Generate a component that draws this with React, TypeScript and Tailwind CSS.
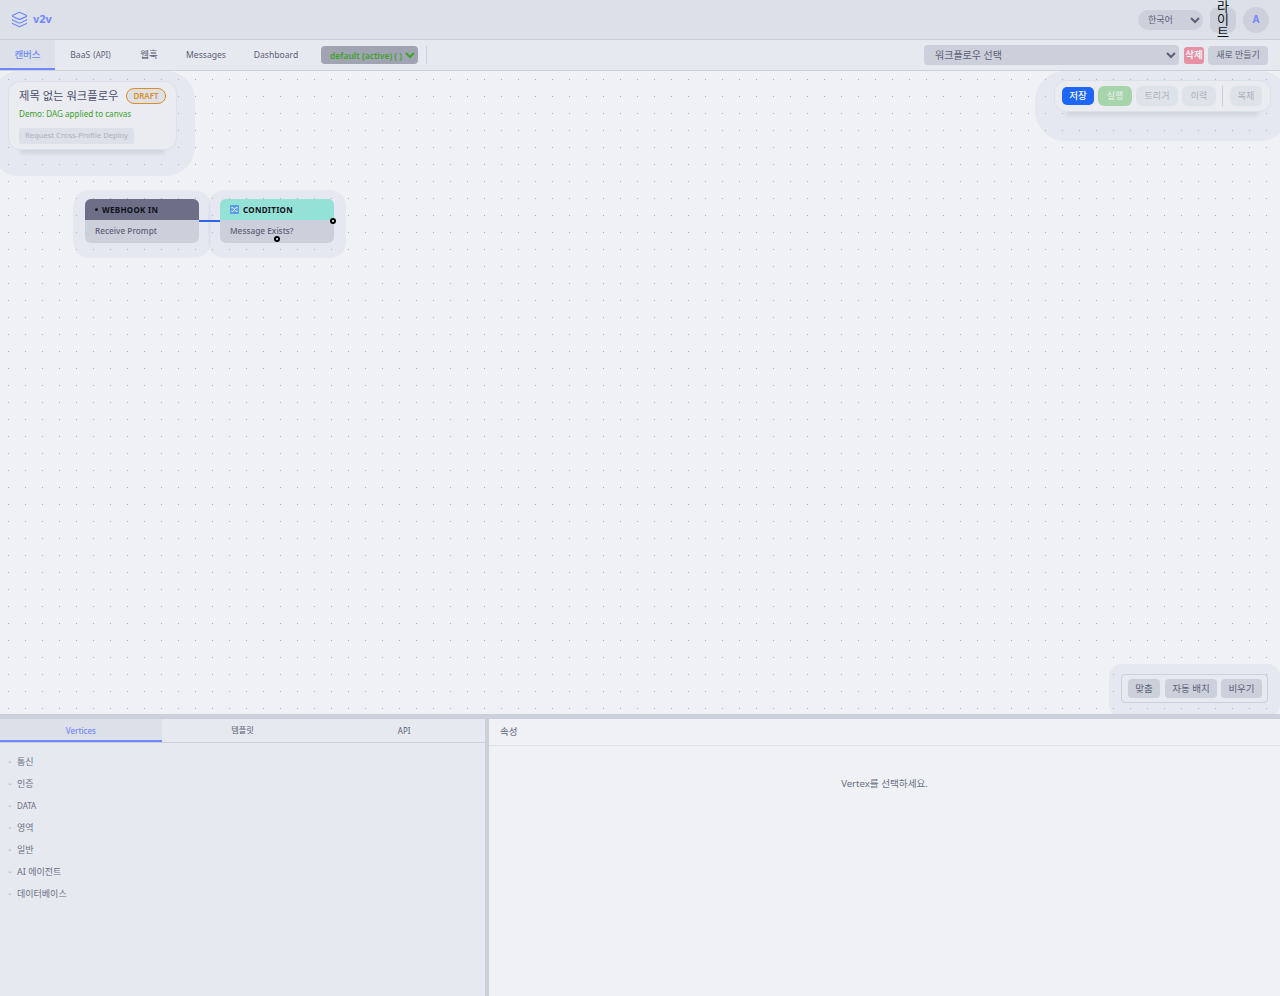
import { Layers } from "lucide-react";

const font = "font-['Noto_Sans','Noto_Sans_CJK_KR',sans-serif]";

function Tab({ label, active, w, size }: { label: React.ReactNode; active?: boolean; w: string; size: string }) {
  return (
    <div className={`${w} ${size} h-full pt-[2px] flex items-center justify-center border-b-2 ${active ? "bg-[#dce0e8] text-[#7287fd] border-[#7287fd] font-medium" : "border-transparent text-[#5c5f77]"}`}>
      {label}
    </div>
  );
}

function GhostButton({ label, w }: { label: string; w: string }) {
  return (
    <button className={`${w} h-[20px] rounded-[6px] bg-[#dce0e8] text-[#9ca0b0] text-[9px] opacity-80`}>{label}</button>
  );
}

function Node({ title, body, header, titleColor, icon, children }: { title: string; body: string; header: string; titleColor: string; icon: React.ReactNode; children?: React.ReactNode }) {
  return (
    <div className="relative w-[114px] h-[44px] rounded-[6px] bg-[#ccd0da] shadow-[0_3px_0_12px_rgba(190,200,225,0.2)]">
      <div className={`h-[21px] rounded-t-[6px] ${header} flex items-center gap-[4px] pl-[10px] text-[8px] font-bold tracking-[0.3px] ${titleColor}`}>
        {icon}
        <span>{title}</span>
      </div>
      <div className="h-[22px] flex items-center pl-[10px] text-[8.3px] text-[#5c5f77] font-medium">{body}</div>
      {children}
    </div>
  );
}

function Handle({ className }: { className: string }) {
  return <span className={`absolute w-[6px] h-[6px] rounded-full bg-white border-[2px] border-black ${className}`} />;
}

export default function App() {
  const groups = ["통신", "인증", "DATA", "영역", "일반", "AI 에이전트", "데이터베이스"];
  return (
    <div className={`${font} w-[1280px] h-[996px] overflow-hidden flex flex-col bg-[#eff1f5] text-[#4c4f69]`}>
      <header className="h-[40px] shrink-0 bg-[#dce0e8] border-b border-[#ccd0da] flex items-center pl-[11px] pr-[11px]">
        <Layers className="w-[17px] h-[17px] text-[#7287fd]" strokeWidth={1.6} />
        <span className="ml-[5px] text-[11px] font-bold text-[#7287fd]">v2v</span>
        <div className="ml-auto flex items-center">
          <select className="w-[65px] h-[20px] rounded-full bg-[#ccd0da] text-[9px] text-[#5c5f77] pl-[6px] outline-none" defaultValue="ko">
            <option value="ko">한국어</option>
          </select>
          <button className="ml-[7px] w-[26px] h-[26px] px-[6px] rounded-[8px] bg-[#ccd0da] text-[13px] leading-[13px] text-[#11111b] flex items-center justify-center">
            라이트
          </button>
          <div className="ml-[7px] w-[26px] h-[26px] rounded-full bg-[#ccd0da] flex items-center justify-center text-[10px] font-bold text-[#7287fd]">A</div>
        </div>
      </header>

      <nav className="h-[31px] shrink-0 bg-[#e6e9ef] border-b border-[#ccd0da] flex items-center pr-[12px]">
        <div className="h-full flex items-center">
          <Tab label="캔버스" active w="w-[55px]" size="text-[9.5px]" />
          <Tab label={<span className="flex gap-[3px]"><span>BaaS</span><span className="text-[8px]">(API)</span></span>} w="w-[71px]" size="text-[8.6px]" />
          <Tab label="웹훅" w="w-[46px]" size="text-[9.5px]" />
          <Tab label="Messages" w="w-[68px]" size="text-[8.6px]" />
          <Tab label="Dashboard" w="w-[72px]" size="text-[8.6px]" />
        </div>
        <select className="ml-[9px] w-[97px] h-[18px] rounded-[4px] bg-[#a0a4b2] text-[8.5px] font-semibold text-[#40a02b] pl-[5px] outline-none" defaultValue="d">
          <option value="d">default (active) ( )</option>
        </select>
        <div className="ml-[8px] w-px h-[18px] bg-[#ccd0da]" />
        <select className="ml-auto w-[255px] h-[20px] rounded-[4px] bg-[#ccd0da] text-[10px] text-[#5c5f77] pl-[7px] outline-none" defaultValue="n">
          <option value="n">워크플로우 선택</option>
        </select>
        <button className="ml-[5px] w-[20px] h-[17px] rounded-[3px] bg-[#e78fa3] text-[9.5px] font-semibold text-[#eff1f5]">삭제</button>
        <button className="ml-[4px] w-[60px] h-[19px] rounded-[4px] bg-[#ccd0da] text-[9px] text-[#5c5f77]">새로 만들기</button>
      </nav>

      <main className="relative h-[643px] shrink-0 overflow-hidden bg-[#eff1f5] bg-[radial-gradient(circle,#acb0be_0.5px,transparent_0.9px)] bg-[length:17px_17px]">
        <section className="absolute left-[8px] top-[10px] w-[169px] h-[69px] rounded-[12px] bg-[#eaecf2] border border-[#dce0e8] px-[10px] pt-[5px] shadow-[0_16px_4px_-12px_#d3d6e0,0_8px_0_18px_rgba(190,200,225,0.2)]">
          <div className="flex items-center h-[18px]">
            <span className="whitespace-nowrap text-[11.3px] text-[#4c4f69]">제목 없는 워크플로우</span>
            <span className="ml-auto w-[40px] h-[16px] rounded-full bg-[#dce0e8] border border-[#df8e1d] text-[8px] font-semibold text-[#df8e1d] flex items-center justify-center">DRAFT</span>
          </div>
          <div className="mt-[3px] whitespace-nowrap text-[8.1px] leading-[12px] text-[#40a02b]">Demo: DAG applied to canvas</div>
          <button className="mt-[4px] w-[115px] h-[16px] whitespace-nowrap rounded-[3px] bg-[#dce0e8] text-[7.6px] text-[#acb0be]">Request Cross-Profile Deploy</button>
        </section>

        <div className="absolute left-[85px] top-[128px] flex gap-[21px]">
          <Node title="WEBHOOK IN" body="Receive Prompt" header="bg-[#6c6f85]" titleColor="text-[#11111b]" icon={<span className="w-[3px] h-[3px] rounded-full bg-[#11111b]" />} />
          <Node
            title="CONDITION"
            body="Message Exists?"
            header="bg-[#94e2d5]"
            titleColor="text-[#11111b]"
            icon={
              <svg viewBox="0 0 10 10" className="w-[9px] h-[9px]">
                <rect width="10" height="10" rx="1" fill="#5b9be8" />
                <path d="M1.5 3h2l3 4h2M1.5 7h2l3-4h2" stroke="#fff" strokeWidth="1" fill="none" />
              </svg>
            }
          >
            <Handle className="right-[-2px] top-[19px]" />
            <Handle className="left-[54px] bottom-[1px]" />
          </Node>
          <div className="absolute z-10 left-[114px] top-[21px] w-[21px] h-[1.5px] bg-[#2f66e8]" />
        </div>

        <section className="absolute right-[9px] top-[9px] w-[217px] h-[32px] rounded-[12px] bg-[#eaecf2] border border-[#dce0e8] flex items-center pl-[7px] shadow-[0_16px_4px_-12px_#d3d6e0,0_10px_0_19px_rgba(190,200,225,0.2)]">
          <button className="w-[32px] h-[18px] rounded-[5px] bg-[#1e66f5] text-white text-[9.5px] font-medium">저장</button>
          <button className="ml-[4px] w-[34px] h-[20px] rounded-[6px] bg-[#a6d5ab] text-[#eff1f5] text-[9px]">실행</button>
          <GhostButton label="트리거" w="ml-[4px] w-[42px]" />
          <GhostButton label="이력" w="ml-[4px] w-[34px]" />
          <div className="ml-[6px] w-px h-[20px] bg-[#ccd0da]" />
          <GhostButton label="복제" w="ml-[7px] w-[32px]" />
        </section>

        <section className="absolute right-[12px] bottom-[11px] w-[147px] h-[29px] rounded-[4px] border border-[#ccd0da] bg-[#e6e9ef] flex items-center pl-[6px] shadow-[0_2px_0_12px_rgba(190,200,225,0.2)]">
          <button className="w-[32px] h-[19px] pt-[1px] rounded-[4px] bg-[#ccd0da] text-[9.5px] text-[#5c5f77]">맞춤</button>
          <button className="ml-[5px] w-[52px] h-[19px] pt-[1px] rounded-[4px] bg-[#ccd0da] text-[9.5px] text-[#5c5f77]">자동 배치</button>
          <button className="ml-[4px] w-[41px] h-[19px] pt-[1px] rounded-[4px] bg-[#ccd0da] text-[9.5px] text-[#5c5f77]">비우기</button>
        </section>
      </main>

      <div className="h-[5px] shrink-0 bg-[#ccd0da]" />

      <div className="flex-1 flex min-h-0">
        <aside className="w-[485px] shrink-0 bg-[#e6e9ef] flex flex-col">
          <div className="h-[24px] flex border-b border-[#ccd0da]">
            <Tab label="Vertices" active w="flex-1" size="text-[8px]" />
            <Tab label="템플릿" w="flex-1" size="text-[8.2px]" />
            <Tab label="API" w="flex-1" size="text-[8px]" />
          </div>
          <ul className="pt-[8px]">
            {groups.map((g) => (
              <li key={g} className="h-[22px] flex items-center pl-[8px] text-[9px] text-[#6c6f85]">
                <span className="w-[9px] text-[6px] text-[#9ca0b0]">&gt;</span>
                <span className={g === "DATA" ? "text-[8px]" : ""}>{g}</span>
              </li>
            ))}
          </ul>
        </aside>
        <div className="w-[4px] shrink-0 bg-[#ccd0da]" />
        <section className="flex-1 bg-[#eff1f5] flex flex-col">
          <div className="h-[27px] flex items-center pl-[11px] text-[9.5px] text-[#5c5f77] border-b border-[#dce0e8]">속성</div>
          <div className="pt-[31px] text-center text-[9.6px] text-[#6c6f85]">Vertex를 선택하세요.</div>
        </section>
      </div>
    </div>
  );
}
